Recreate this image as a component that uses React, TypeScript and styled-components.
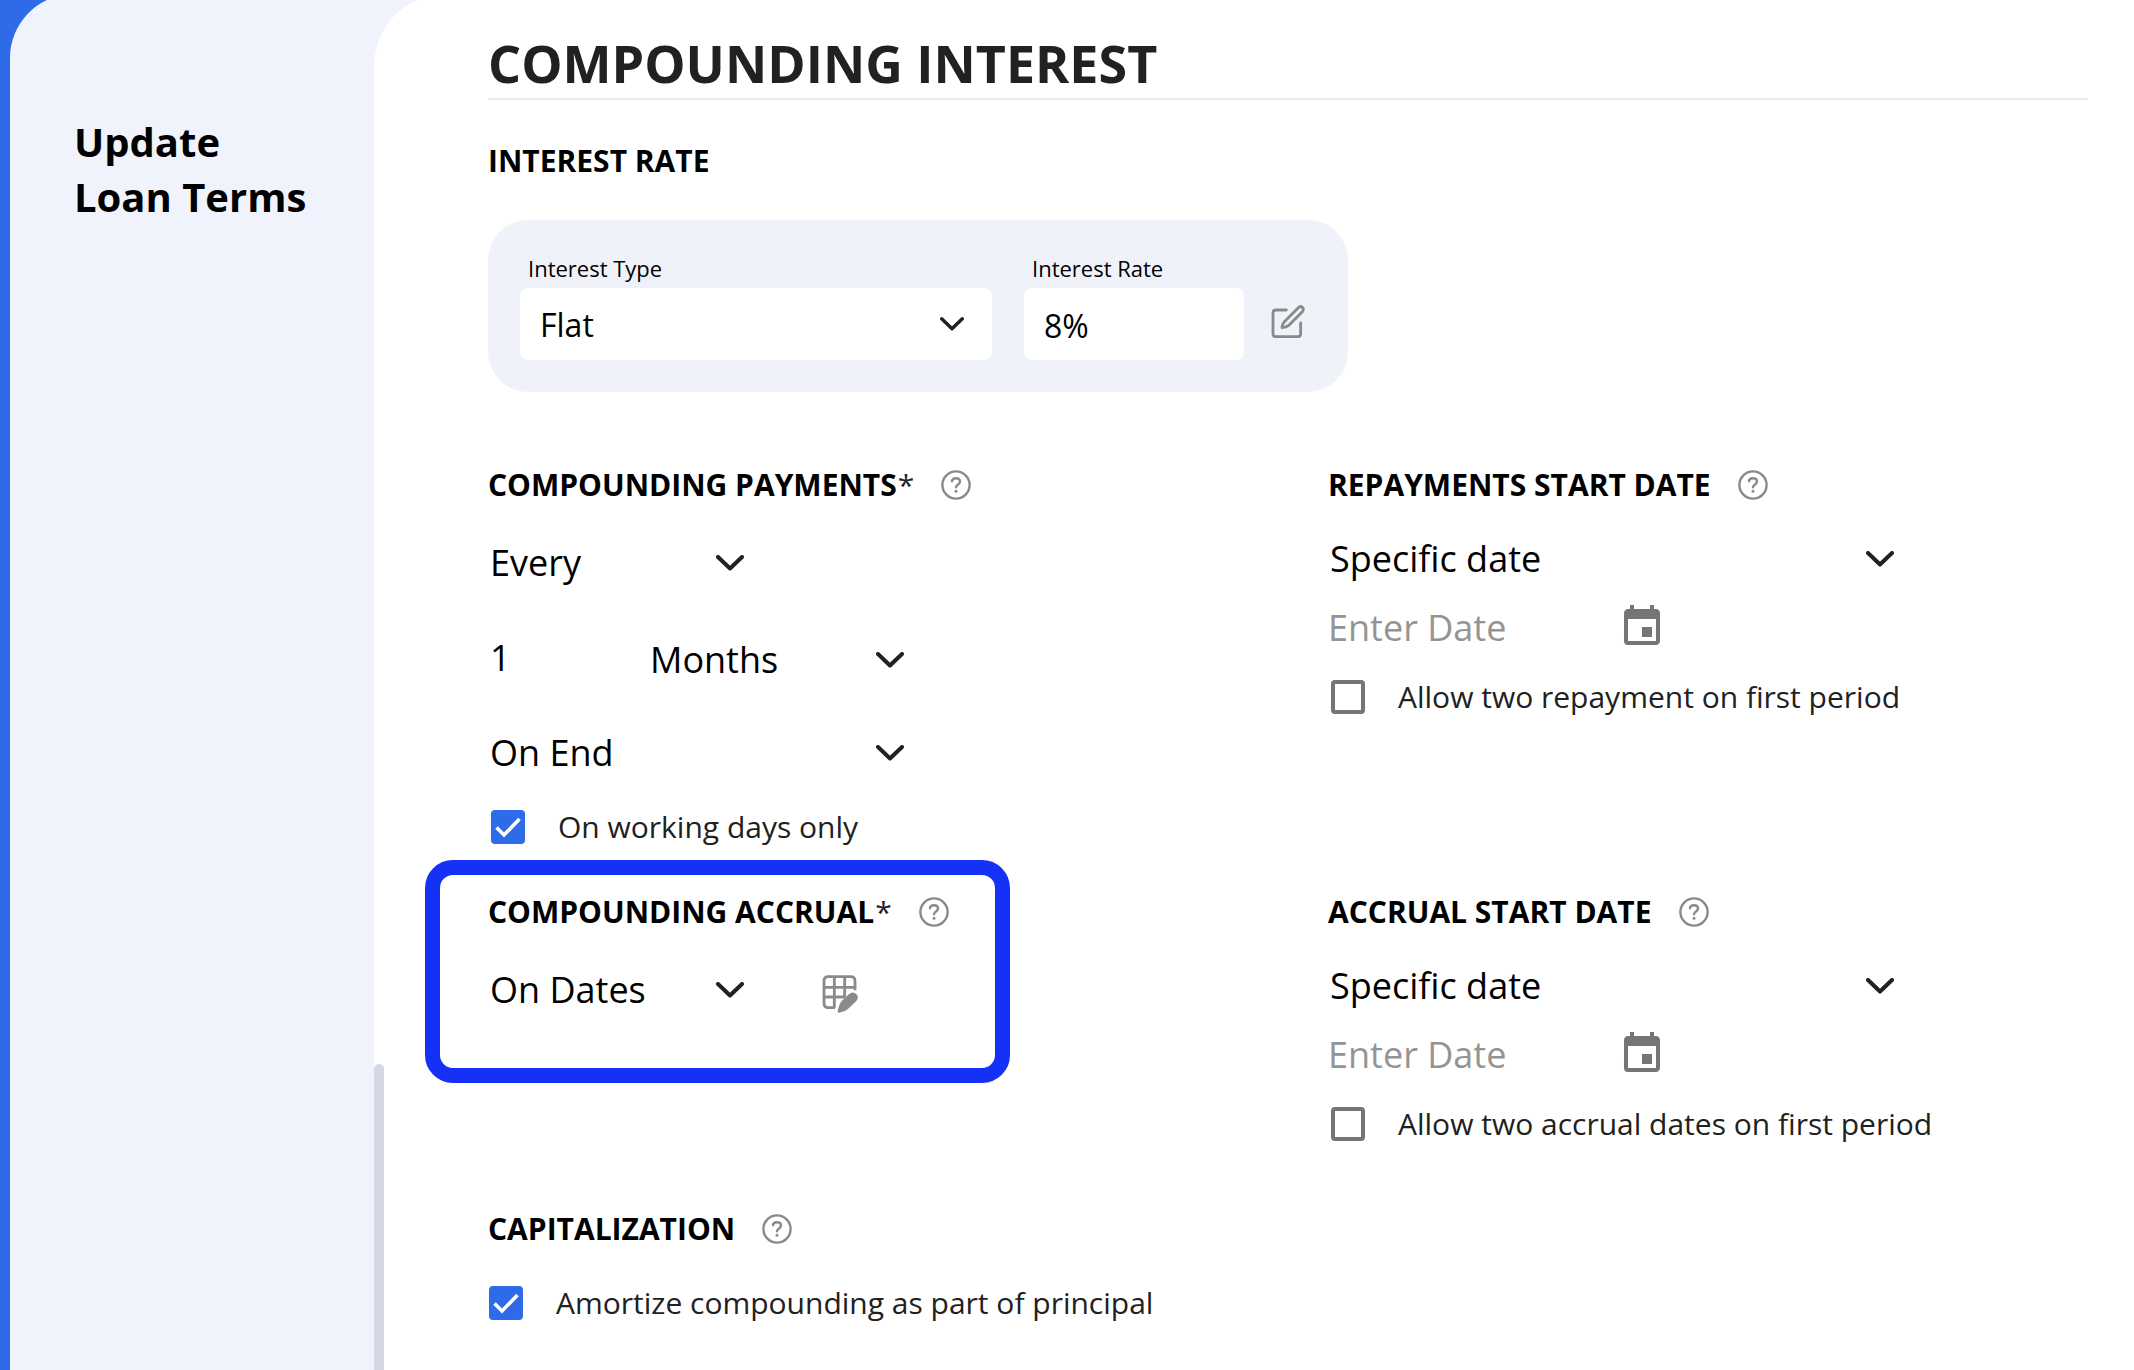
import React, { useId, useState } from "react";
import styled, { createGlobalStyle } from "styled-components";
import { MdEvent } from "react-icons/md";

const GlobalStyle = createGlobalStyle`
  *, *::before, *::after { box-sizing: border-box; }
  html, body { margin: 0; padding: 0; }
  body {
    background: #2d6be9;
    color: #000;
    font-family: "Open Sans", "Noto Sans", sans-serif;
    overflow-x: hidden;
  }
  button, input, select { font: inherit; color: inherit; }
`;

const Shell = styled.div`
  display: flex;
  min-height: calc(100vh + 6px);
  margin: -6px 0 0 10px;
  border-top-left-radius: 64px;
  background: #f0f3fb;
`;

const Backdrop = styled.div`
  display: flow-root;
  background: #2d6be9;
  overflow: hidden;
`;

const Sidebar = styled.aside`
  flex: 0 0 364px;
  padding: 120px 64px 0;
`;

const SidebarTitle = styled.h2`
  margin: 0;
  font-size: 40px;
  line-height: 55px;
  font-weight: 700;
  white-space: pre-line;
`;

const Panel = styled.main`
  flex: 1;
  min-width: 0;
  display: flex;
  background: #fff;
  border-top-left-radius: 72px;
`;

const ScrollTrack = styled.div`
  flex: 0 0 10px;
  display: flex;
  align-items: flex-end;
`;

const ScrollThumb = styled.div`
  width: 10px;
  height: 306px;
  border-radius: 5px 5px 0 0;
  background: #d5d7e3;
`;

const Content = styled.div`
  flex: 1;
  min-width: 0;
  padding: 34px 46px 0 104px;
`;

const PageTitle = styled.h1`
  margin: 0 0 41px;
  border-bottom: 2px solid #ececec;
  color: #212121;
  font-size: 52px;
  line-height: 70px;
  font-weight: 700;
`;

const HeadingRow = styled.div`
  display: flex;
  align-items: center;
  gap: 27px;
`;

const Heading = styled.h3`
  margin: 0;
  font-size: 30px;
  line-height: 40px;
  font-weight: 700;
`;

const Required = styled.span`
  margin-left: 1px;
  color: #212121;
  font-weight: 400;
`;

const IconButton = styled.button`
  display: flex;
  align-items: center;
  justify-content: center;
  flex: none;
  padding: 0;
  border: 0;
  background: none;
  color: #8a8a8a;
  cursor: pointer;
  svg { display: block; flex: none; }
`;

const RateCard = styled.div`
  display: flex;
  align-items: flex-end;
  gap: 32px;
  width: fit-content;
  margin: 39px 0 73px;
  padding: 32px 40px 32px 32px;
  border-radius: 40px;
  background: #f0f2fa;
`;

const RateGroup = styled.div`
  display: flex;
  align-items: flex-end;
  gap: 24px;
`;

const EditButton = styled(IconButton)`
  width: 40px;
  height: 72px;
`;

const Field = styled.div<{ $width: number }>`
  display: flex;
  flex-direction: column;
  gap: 4px;
  width: ${(p) => p.$width}px;
`;

const FieldLabel = styled.label`
  padding-left: 8px;
  font-size: 22px;
  line-height: 32px;
`;

const BoxInput = styled.input`
  width: 100%;
  height: 72px;
  padding: 2px 20px 0;
  border: 0;
  border-radius: 8px;
  background: #fff;
  font-size: 32px;
`;

const SelectWrap = styled.div<{ $width?: number }>`
  display: grid;
  align-items: center;
  width: ${(p) => (p.$width ? `${p.$width}px` : "100%")};
  & > * { grid-area: 1 / 1; }
  & > svg {
    justify-self: end;
    pointer-events: none;
    color: #212121;
  }
`;

const BoxSelectWrap = styled(SelectWrap)`
  & > svg { margin-right: 28px; }
`;

const PlainSelect = styled.select`
  appearance: none;
  width: 100%;
  height: 48px;
  padding: 0 32px 0 2px;
  border: 0;
  background: transparent;
  font-size: 36px;
  line-height: 48px;
`;

const BoxSelect = styled(PlainSelect)`
  height: 72px;
  padding: 2px 56px 0 20px;
  border-radius: 8px;
  background: #fff;
  font-size: 32px;
`;

const Grid = styled.div<{ $after: number }>`
  display: grid;
  grid-template-columns: 21fr 19fr;
  margin-bottom: ${(p) => p.$after}px;
`;

const Section = styled.section`
  position: relative;
`;

const Row = styled.div<{ $before: number }>`
  display: flex;
  align-items: center;
  margin-top: ${(p) => p.$before}px;
`;

const NumberInput = styled.input`
  width: 160px;
  height: 48px;
  padding: 0 0 6px 2px;
  border: 0;
  background: transparent;
  font-size: 36px;
`;

const DateInput = styled.input`
  width: 290px;
  height: 48px;
  padding: 0;
  border: 0;
  background: transparent;
  font-size: 36px;
  &::placeholder { color: #949494; opacity: 1; }
`;

const CalendarButton = styled(IconButton)`
  color: #757575;
`;

const DatesButton = styled(IconButton)`
  width: 40px;
  height: 48px;
  align-items: flex-end;
  margin-left: 77px;
`;

const CheckLabel = styled.label<{ $indent: number }>`
  display: flex;
  align-items: center;
  gap: 33px;
  padding-left: ${(p) => p.$indent}px;
  color: #212121;
  font-size: 30px;
  line-height: 40px;
  cursor: pointer;
`;

const CheckBoxCell = styled.span`
  display: grid;
  flex: none;
  & > * { grid-area: 1 / 1; }
  & > svg { pointer-events: none; }
`;

const CheckInput = styled.input`
  appearance: none;
  width: 34px;
  height: 34px;
  margin: 0;
  border: 4px solid #757575;
  border-radius: 4px;
  background: #fff;
  &:checked {
    border-color: #2d6be9;
    background: #2d6be9;
  }
`;

/* Callout frame drawn over the accrual section */
const Highlight = styled.div`
  position: absolute;
  top: -32px;
  left: -63px;
  width: 585px;
  height: 223px;
  border: 15px solid #1531f5;
  border-radius: 28px;
  pointer-events: none;
`;

const Chevron = ({ small = false }: { small?: boolean }) => (
  <svg width={small ? 24 : 28} height={small ? 14 : 16} viewBox="0 0 28 16" fill="none" aria-hidden="true">
    <path d="M2 2 14 13.500 26 2" stroke="currentColor" strokeWidth="4" strokeLinecap="round" strokeLinejoin="round" />
  </svg>
);

const HelpIcon = () => (
  <svg width="30" height="30" viewBox="0 0 30 30" fill="none" stroke="currentColor" strokeWidth="2.4" strokeLinecap="round" strokeLinejoin="round" aria-hidden="true">
    <circle cx="15" cy="15" r="13.6" />
    <path d="M11 11.2C11.2 9.2 12.9 8.2 15 8.2c2.300 0 4 1.300 4 3.300 0 1.700-1 2.400-2.200 3.200C15.600 15.500 15 16 15 17.200" />
    <circle cx="15" cy="21.300" r="1.500" fill="currentColor" stroke="none" />
  </svg>
);

const EditIcon = () => (
  <svg width="42" height="42" viewBox="21 39 126 126" fill="none" stroke="currentColor" strokeWidth="8.400" strokeLinecap="round" strokeLinejoin="round" aria-hidden="true">
    <path d="M79 60H48Q39 60 39 69V131Q39 140 48 140H113Q122 140 122 131V99" />
    <path d="M66 113Q67 101 73 95L115 53Q121 47 127 52Q133 58 127 65L85 107Q79 112 66 113Z" />
  </svg>
);

const TableEditIcon = () => (
  <svg width="38" height="40" viewBox="67 67 114 120" fill="none" aria-hidden="true">
    <path d="M166 116V88Q166 75 153 75H86Q73 75 73 88V154Q73 168 86 168H106M73 107H166M73 136H136M104 75V168M135 75V136" stroke="currentColor" strokeWidth="8.400" />
    <path d="M118 183Q113 183 114 177L120 158Q122 152 127 147L148 127Q160 118 170 127Q179 137 170 148L148 169Q143 174 137 177Z" fill="currentColor" />
  </svg>
);

const TickIcon = () => (
  <svg width="34" height="34" viewBox="0 0 34 34" fill="none" aria-hidden="true">
    <path d="M5.500 17.500 13 25 28.500 9" stroke="#fff" strokeWidth="3.600" />
  </svg>
);

function Help({ topic }: { topic: string }) {
  return (
    <IconButton type="button" aria-label={`Help: ${topic}`}>
      <HelpIcon />
    </IconButton>
  );
}

function SectionHeading({ title, required = false }: { title: string; required?: boolean }) {
  return (
    <HeadingRow>
      <Heading>
        {title}
        {required && <Required>*</Required>}
      </Heading>
      <Help topic={title} />
    </HeadingRow>
  );
}

function Picker({ label, options, width }: { label: string; options: string[]; width: number }) {
  return (
    <SelectWrap $width={width}>
      <PlainSelect aria-label={label} defaultValue={options[0]}>
        {options.map((o) => (
          <option key={o}>{o}</option>
        ))}
      </PlainSelect>
      <Chevron />
    </SelectWrap>
  );
}

function Check({ label, initial = false, indent }: { label: string; initial?: boolean; indent: number }) {
  const [checked, setChecked] = useState(initial);
  const id = useId();
  return (
    <CheckLabel htmlFor={id} $indent={indent}>
      <CheckBoxCell>
        <CheckInput id={id} type="checkbox" checked={checked} onChange={(e) => setChecked(e.target.checked)} />
        {checked && <TickIcon />}
      </CheckBoxCell>
      {label}
    </CheckLabel>
  );
}

function StartDate({ title, checkLabel }: { title: string; checkLabel: string }) {
  return (
    <Section>
      <SectionHeading title={title} />
      <Row $before={30}>
        <Picker label={title} options={["Specific date"]} width={566} />
      </Row>
      <Row $before={20}>
        <DateInput type="text" placeholder="Enter Date" aria-label={`${title} value`} />
        <CalendarButton type="button" aria-label="Open calendar">
          <MdEvent size={48} />
        </CalendarButton>
      </Row>
      <Row $before={26}>
        <Check label={checkLabel} indent={3} />
      </Row>
    </Section>
  );
}

export default function App() {
  return (
    <>
      <GlobalStyle />
      <Backdrop>
        <Shell>
          <Sidebar>
            <SidebarTitle>{"Update\nLoan Terms"}</SidebarTitle>
          </Sidebar>
          <Panel>
            <ScrollTrack>
              <ScrollThumb />
            </ScrollTrack>
            <Content>
              <PageTitle>COMPOUNDING INTEREST</PageTitle>
              <Heading>INTEREST RATE</Heading>
              <RateCard>
                <Field $width={472}>
                  <FieldLabel htmlFor="interest-type">Interest Type</FieldLabel>
                  <BoxSelectWrap>
                    <BoxSelect id="interest-type" defaultValue="Flat">
                      <option>Flat</option>
                    </BoxSelect>
                    <Chevron small />
                  </BoxSelectWrap>
                </Field>
                <RateGroup>
                  <Field $width={220}>
                    <FieldLabel htmlFor="interest-rate">Interest Rate</FieldLabel>
                    <BoxInput id="interest-rate" type="text" defaultValue="8%" />
                  </Field>
                  <EditButton type="button" aria-label="Edit interest rate">
                    <EditIcon />
                  </EditButton>
                </RateGroup>
              </RateCard>

              <Grid $after={45}>
                <Section>
                  <SectionHeading title="COMPOUNDING PAYMENTS" required />
                  <Row $before={34}>
                    <Picker label="Payment schedule" options={["Every"]} width={256} />
                  </Row>
                  <Row $before={49}>
                    <NumberInput type="text" aria-label="Number of periods" defaultValue="1" />
                    <Picker label="Period unit" options={["Months"]} width={256} />
                  </Row>
                  <Row $before={45}>
                    <Picker label="Payment position" options={["On End"]} width={416} />
                  </Row>
                  <Row $before={30}>
                    <Check label="On working days only" initial indent={3} />
                  </Row>
                </Section>
                <StartDate title="REPAYMENTS START DATE" checkLabel="Allow two repayment on first period" />
              </Grid>

              <Grid $after={65}>
                <Section>
                  <Highlight />
                  <SectionHeading title="COMPOUNDING ACCRUAL" required />
                  <Row $before={34}>
                    <Picker label="Accrual schedule" options={["On Dates"]} width={256} />
                    <DatesButton type="button" aria-label="Edit accrual dates">
                      <TableEditIcon />
                    </DatesButton>
                  </Row>
                </Section>
                <StartDate title="ACCRUAL START DATE" checkLabel="Allow two accrual dates on first period" />
              </Grid>

              <Section>
                <SectionHeading title="CAPITALIZATION" />
                <Row $before={34}>
                  <Check label="Amortize compounding as part of principal" initial indent={1} />
                </Row>
              </Section>
            </Content>
          </Panel>
        </Shell>
      </Backdrop>
    </>
  );
}
